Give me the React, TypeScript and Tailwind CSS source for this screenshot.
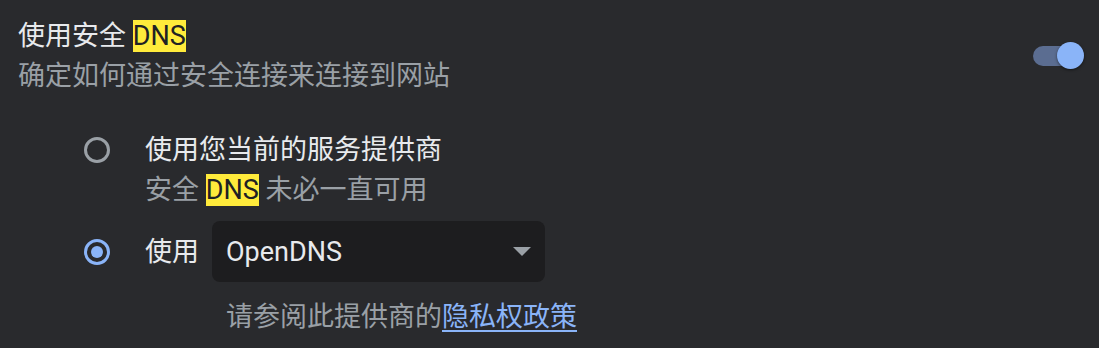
import React from 'react';

const font = { fontFamily: 'Roboto, "Noto Sans CJK SC", sans-serif' };

const Mark = ({ children }: { children: React.ReactNode }) => (
    <span className="inline-block bg-[#ffeb3b] text-[#202124] h-[32px] leading-[32px]">{children}</span>
);

const Radio = ({ checked }: { checked?: boolean }) => (
    <div
        className={`w-[26px] h-[26px] rounded-full border-[3px] flex items-center justify-center shrink-0 ${
            checked ? 'border-[#8ab4f8]' : 'border-[#9aa0a6]'
        }`}
    >
        {checked && <div className="w-[12px] h-[12px] rounded-full bg-[#8ab4f8]" />}
    </div>
);

const App = () => {
    return (
        <div
            className="w-[1099px] h-[348px] bg-[#292a2d] pt-4 pl-[18px] pr-[15px] overflow-hidden text-[27px] leading-[40px]"
            style={font}
        >
            <div className="flex items-center justify-between">
                <div>
                    <div className="text-[#e8eaed]">
                        使用安全 <Mark>DNS</Mark>
                    </div>
                    <div className="text-[#9aa0a6]">确定如何通过安全连接来连接到网站</div>
                </div>
                <div className="relative w-[51px] h-[28px] flex items-center">
                    <div className="w-[44px] h-[20px] rounded-full bg-[#5b6d91]" />
                    <div className="absolute right-0 top-0 w-[27px] h-[27px] rounded-full bg-[#8ab4f8] shadow-[0_1px_3px_rgba(0,0,0,0.5)]" />
                </div>
            </div>

            <div className="ml-[66px] mt-[34px]">
                <div className="flex items-start gap-[35px]">
                    <div className="mt-[7px]">
                        <Radio />
                    </div>
                    <div>
                        <div className="text-[#e8eaed]">使用您当前的服务提供商</div>
                        <div className="text-[#9aa0a6]">
                            安全 <Mark>DNS</Mark> 未必一直可用
                        </div>
                    </div>
                </div>

                <div className="flex items-center gap-[35px] mt-[11px]">
                    <Radio checked />
                    <div className="flex items-center gap-[13px]">
                        <span className="text-[#e8eaed]">使用</span>
                        <div className="w-[333px] h-[61px] rounded-[8px] bg-[#1d1d1f] flex items-center justify-between pl-[14px] pr-[14px]">
                            <span className="text-[#e8eaed]">OpenDNS</span>
                            <svg width="18" height="9" viewBox="0 0 18 9">
                                <path d="M0 0 L18 0 L9 9 Z" fill="#9aa0a6" />
                            </svg>
                        </div>
                    </div>
                </div>

                <div className="ml-[142px] mt-[15px] text-[#9aa0a6]">
                    请参阅此提供商的
                    <a className="text-[#8ab4f8] underline underline-offset-[4px]">隐私权政策</a>
                </div>
            </div>
        </div>
    );
};

export default App;
